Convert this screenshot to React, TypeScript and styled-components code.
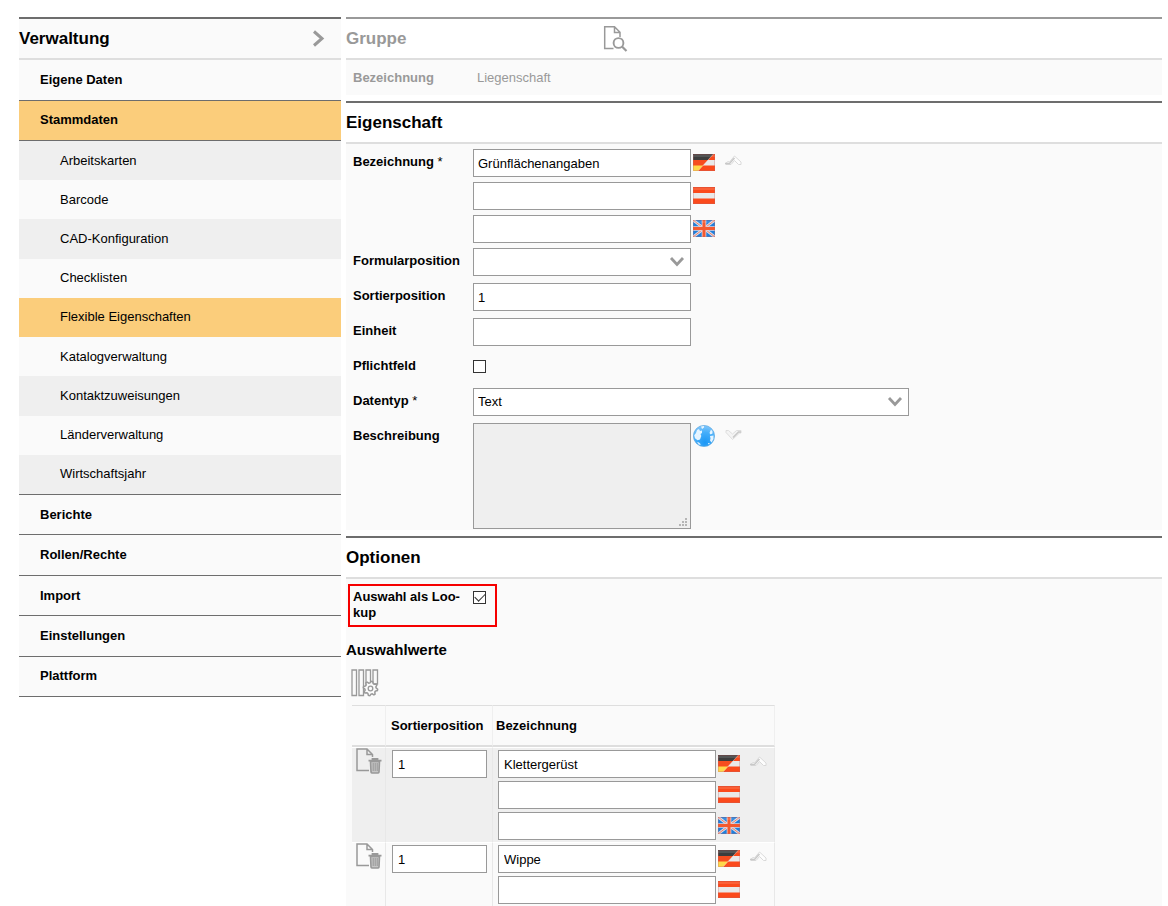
import React, { useState } from "react";
import styled, { createGlobalStyle, css } from "styled-components";

const GlobalStyle = createGlobalStyle`
  * { box-sizing: border-box; }
  body {
    margin: 0;
    background: #fff;
    color: #000;
    font: 13px/16px Arial, "Liberation Sans", sans-serif;
  }
  input, select, textarea, button { font: inherit; color: inherit; }
`;

const Page = styled.div`
  display: flex;
  align-items: flex-start;
  gap: 5px;
  height: 100vh;
  overflow: hidden;
  padding: 17px 6px 0 19px;
`;

/* ---------- Sidebar ---------- */

const Sidebar = styled.nav`
  flex: 0 0 322px;
  background: #fafafa;
  border-top: 2px solid #6d6d6d;
`;

const SidebarHeader = styled.div`
  display: flex;
  align-items: center;
  justify-content: space-between;
  height: 41px;
  padding-right: 16px;
  border-bottom: 2px solid #dedede;
`;

const Title = styled.h2<{ $muted?: boolean }>`
  margin: 0;
  padding-top: 1px;
  font-size: 17px;
  line-height: 20px;
  font-weight: bold;
  color: ${(p) => (p.$muted ? "#999" : "#000")};
`;

const PlainButton = styled.button`
  display: flex;
  padding: 0;
  border: 0;
  background: none;
  cursor: pointer;
`;

const NavGroup = styled.ul<{ $height: number }>`
  display: flex;
  flex-direction: column;
  height: ${(p) => p.$height}px;
  margin: 0;
  padding: 0;
  list-style: none;
`;

const NavItem = styled.li`
  display: flex;
  flex: 1;
`;

const NavLink = styled.a<{ $active?: boolean }>`
  display: flex;
  flex: 1;
  align-items: center;
  padding-left: 21px;
  border-bottom: 1px solid #6d6d6d;
  background: ${(p) => (p.$active ? "#fbcd7b" : "transparent")};
  color: #000;
  font-weight: bold;
  text-decoration: none;
`;

const SubLink = styled.a<{ $active?: boolean; $shaded?: boolean }>`
  display: flex;
  flex: 1;
  align-items: center;
  padding-left: 41px;
  background: ${(p) => (p.$active ? "#fbcd7b" : p.$shaded ? "#efefef" : "transparent")};
  color: #000;
  text-decoration: none;
`;

const SubGroup = styled(NavGroup)`
  border-bottom: 1px solid #6d6d6d;
`;

/* ---------- Main column ---------- */

const Main = styled.main`
  flex: 1;
  min-width: 0;
`;

const Section = styled.section<{ $muted?: boolean }>`
  margin-bottom: 6px;
  border-top: 2px solid ${(p) => (p.$muted ? "#999" : "#6d6d6d")};
`;

const SectionHeader = styled.header`
  display: grid;
  grid-template-columns: 257px auto;
  justify-content: start;
  align-items: center;
  height: 41px;
  border-bottom: 2px solid #dedede;
`;

const SectionBody = styled.div`
  padding: 5px 7px 1px;
  background: #fafafa;
`;

const GroupBody = styled.div`
  display: flex;
  height: 35px;
  padding: 10px 7px 0;
  background: #fafafa;
  color: #999;
`;

const GroupLabel = styled.span`
  width: 124px;
  font-weight: bold;
`;

const Row = styled.div<{ $tight?: boolean }>`
  display: flex;
  align-items: flex-start;
  padding-bottom: ${(p) => (p.$tight ? 0 : 7)}px;
`;

const Label = styled.label`
  flex: 0 0 120px;
  padding: 5px 8px 0 0;
  font-weight: bold;
`;

const Required = styled.span`
  font-weight: normal;
`;

const Lines = styled.div<{ $gap: number; $end?: number }>`
  display: flex;
  flex-direction: column;
  gap: ${(p) => p.$gap}px;
  padding-bottom: ${(p) => p.$end ?? 0}px;
`;

const Line = styled.div`
  display: flex;
  align-items: flex-start;
  gap: 2px;
`;

const box = css`
  border: 1px solid #999;
  border-radius: 0;
  background: #fff;
  outline: none;
`;

const TextInput = styled.input<{ $width: number }>`
  ${box}
  display: block;
  width: ${(p) => p.$width}px;
  height: 28px;
  padding: 0 5px 0 4px;
`;

const CellInput = styled(TextInput)`
  padding-left: 5px;
`;

const SelectWrap = styled.div<{ $width: number }>`
  position: relative;
  width: ${(p) => p.$width}px;
  max-width: 100%;
  svg {
    position: absolute;
    top: 8px;
    right: 6px;
    pointer-events: none;
  }
`;

const Select = styled.select`
  ${box}
  display: block;
  appearance: none;
  width: 100%;
  height: 28px;
  padding: 0 24px 0 4px;
`;

const AreaWrap = styled.div`
  position: relative;
  width: 218px;
  svg {
    position: absolute;
    right: 4px;
    bottom: 3px;
    pointer-events: none;
  }
`;

const TextArea = styled.textarea`
  ${box}
  display: block;
  width: 100%;
  height: 106px;
  padding: 4px;
  background: #efefef;
  resize: none;
`;

const CheckCell = styled.div`
  display: flex;
  height: 28px;
  padding-top: 7px;
`;

const Check = styled.input`
  appearance: none;
  display: flex;
  width: 13px;
  height: 13px;
  margin: 0;
  border: 1px solid #333;
  background: #fff;
  &:checked::before {
    content: "";
    width: 9px;
    height: 5px;
    margin: 1px 0 0 1px;
    border-left: 1px solid #333;
    border-bottom: 1px solid #333;
    transform: rotate(-45deg);
  }
`;

const FlagSlot = styled.span`
  display: flex;
  padding-top: 5px;
`;

const ToggleSlot = styled(PlainButton)`
  margin: 6px 0 0 8px;
`;

const GlobeSlot = styled.span`
  display: flex;
  padding-top: 2px;
`;

/* ---------- Options ---------- */

const OptionsBody = styled.div`
  padding-top: 5px;
  background: #fafafa;
`;

const Highlight = styled.div`
  display: flex;
  width: 149px;
  height: 43px;
  margin-left: 2px;
  padding-left: 3px;
  border: 2px solid #f60000;
`;

const HighlightLabel = styled.label`
  width: 120px;
  padding: 3px 8px 0 0;
  font-weight: bold;
`;

const HighlightCheck = styled.div`
  padding-top: 5px;
`;

const SubTitle = styled.h3`
  margin: 14px 0 0;
  font-size: 15px;
  line-height: 18px;
`;

const Toolbar = styled.div`
  padding: 10px 0 8px 5px;
`;

const Table = styled.table`
  width: 423px;
  margin-left: 6px;
  border-collapse: separate;
  border-spacing: 0;
  table-layout: fixed;
`;

const HeadCell = styled.th<{ $width: number }>`
  width: ${(p) => p.$width}px;
  height: 42px;
  padding: 0 0 0 3px;
  border-top: 1px solid #dedede;
  border-right: 1px solid #efefef;
  border-bottom: 2px solid #dedede;
  text-align: left;
  &:nth-child(2) { padding-left: 5px; }
`;

const BodyRow = styled.tr<{ $shaded?: boolean }>`
  background: ${(p) => (p.$shaded ? "#efefef" : "#fafafa")};
`;

const Cell = styled.td`
  padding: 2px 0 2px 6px;
  border-top: 1px solid #fff;
  border-right: 1px solid #e8e8e8;
  vertical-align: top;
  &:first-child { padding: 0 0 0 4px; }
  &:last-child { padding-left: 5px; }
`;

/* ---------- Icons ---------- */

const ChevronRight = () => (
  <svg width="13" height="17" viewBox="0 0 13 17" fill="none" aria-hidden="true">
    <path d="M2 1.500L10 8.500 2 15.500" stroke="#999" strokeWidth="3" />
  </svg>
);

const ChevronDown = () => (
  <svg width="16" height="12" viewBox="0 0 16 12" fill="none" aria-hidden="true">
    <path d="M2 2l6 6.500L14 2" stroke="#999" strokeWidth="2.800" />
  </svg>
);

const FoldUp = () => (
  <svg width="17" height="11" viewBox="0 0 17 11" fill="none" aria-hidden="true">
    <path d="M.5 8.500L3 6.500 4.500 7l5-6 6.500 6v2.500h-2.500L9.500 5.500 6 9.500H1z" fill="#fdfdfd" stroke="#d6d6d6" strokeWidth=".9" />
    <path d="M0 8.500h4.500L9.500 3" stroke="#c8c8c8" strokeWidth="1.500" />
  </svg>
);

const FoldDown = () => (
  <svg width="17" height="11" viewBox="0 0 17 11" fill="none" aria-hidden="true">
    <path d="M1 1.500h2.500l4 3.500 4-3.500H16V4h-1.500l-7 6.500L1 3.500z" fill="#f4f4f4" stroke="#dadada" strokeWidth=".9" />
    <path d="M8 8.500L13.500 3H16" stroke="#c8c8c8" strokeWidth="1.500" />
  </svg>
);

const SearchDoc = () => (
  <svg width="25" height="27" viewBox="0 0 25 27" fill="none" stroke="#999" aria-hidden="true">
    <path d="M10.500 23.500H1.700V1.800h9.800l5.500 5.500V12M11.500 1.800v5.700h5.500" strokeWidth="1.500" />
    <circle cx="15.500" cy="18" r="4.900" strokeWidth="1.900" />
    <path d="M19 21.500l4.500 4.500" strokeWidth="2.200" />
  </svg>
);

const DeleteDoc = () => (
  <svg width="27" height="27" viewBox="0 0 27 27" fill="none" stroke="#999" aria-hidden="true">
    <path d="M13 22.500H1V1h10l5.500 5.500V9M11 1v5.500h5.500" strokeWidth="1.500" />
    <path d="M14.500 13.500h9l-.5 10.500q-.2 1-1.200 1h-5.600q-1 0-1.200-1z" fill="#c6c6c6" strokeWidth="1.600" />
    <path d="M12.500 12.700H25.500M16.500 11.800v-1h5v1" strokeWidth="1.800" />
    <path d="M17.200 15v8M19.200 15v8M21.200 15v8" strokeWidth="1" />
  </svg>
);

const gearPath = Array.from({ length: 32 }, (_, i) => {
  const radius = i % 4 < 2 ? 7.2 : 5.6;
  const angle = ((i + 0.5) / 32) * Math.PI * 2;
  return `${i ? "L" : "M"}${(19.5 + radius * Math.cos(angle)).toFixed(2)} ${(19.5 + radius * Math.sin(angle)).toFixed(2)}`;
}).join("");

const ColumnsGear = () => (
  <svg width="28" height="28" viewBox="0 0 28 28" fill="none" stroke="#999" aria-hidden="true">
    <path d="M1 1h4.500v25.500H1zM8 1h4.500v25.500H8zM15 1h4.500v14H15zM22 1h4.500v14H22z" strokeWidth="1.300" />
    <path d={`${gearPath}Z`} fill="#fafafa" strokeWidth="1.500" />
    <circle cx="19.500" cy="19.500" r="2.300" strokeWidth="1.300" />
  </svg>
);

const ResizeDots = () => (
  <svg width="8" height="8" viewBox="0 0 8 8" fill="#b5b5b5" aria-hidden="true">
    <path d="M6 0h2v2H6zM3 3h2v2H3zM6 3h2v2H6zM0 6h2v2H0zM3 6h2v2H3zM6 6h2v2H6z" />
  </svg>
);

const Globe = () => (
  <svg width="22" height="22" viewBox="0 0 22 22" role="img" aria-label="Sprachen">
    <defs>
      <radialGradient id="sea" cx="55%" cy="80%" r="85%">
        <stop offset="0" stopColor="#1b97f5" />
        <stop offset=".55" stopColor="#45aefa" />
        <stop offset="1" stopColor="#8bcbfb" />
      </radialGradient>
    </defs>
    <circle cx="11" cy="11" r="10.600" fill="url(#sea)" stroke="#62a9e0" strokeWidth=".7" />
    <path d="M4 5l2-1 1 2 2-.5V8L7.500 9l.8 2L7 14.500l-2.500.7-2.500-2-.8-3L3 8zM8 1.500l3-.5v1.500L9 4zM18 4.500l1.500 2v2l-2 1-1-1.500zM17 11l3.500-.5V14l-2 3.500-1.500-2 .5-2zM4 17l2 .5 2 2-2 .2zM15 18h2l-1.500 1.500z" fill="#f2faff" fillOpacity=".93" />
  </svg>
);

type Lang = "de" | "at" | "en";

const Flag = ({ lang }: { lang: Lang }) => {
  const names = { de: "Deutsch", at: "Österreich", en: "English" };
  return (
    <svg width="22" height="17" viewBox="0 0 22 17" role="img" aria-label={names[lang]}>
      {lang === "en" ? (
        <>
          <path d="M0 0h22v17H0z" fill="#1f7fdc" />
          <path d="M0 0l22 17M22 0L0 17" stroke="#d9dbe6" strokeWidth="2.800" />
          <path d="M0 0l22 17M22 0L0 17" stroke="#f0806a" strokeWidth="1" />
          <path d="M11 0v17M0 8.500h22" stroke="#e6d3da" strokeWidth="4.600" />
          <path d="M11 0v17M0 8.500h22" stroke="#f4592f" strokeWidth="3" />
        </>
      ) : (
        <>
          <path d="M0 0h22v17H0z" fill="#fb4a1c" />
          <path d="M0 6h22v5.500H0z" fill="#e9e9e9" />
          {lang === "de" && (
            <>
              <path d="M0 0h20.500L5 17H0z" fill="#f64d1f" />
              <path d="M0 0h20.500L15 6H0z" fill="#3d3d3d" />
              <path d="M0 11.500h10L5 17H0z" fill="#ffd84a" />
              <path d="M20.500 0L5 17" stroke="#fff" strokeOpacity=".35" />
            </>
          )}
        </>
      )}
      <path d="M0 1h22v2H0z" fill="#fff" fillOpacity=".12" />
      <path d="M.5.500h21v16H.500z" fill="none" stroke="#b66" strokeOpacity=".3" />
    </svg>
  );
};

/* ---------- Data ---------- */

const subItems = [
  "Arbeitskarten",
  "Barcode",
  "CAD-Konfiguration",
  "Checklisten",
  "Flexible Eigenschaften",
  "Katalogverwaltung",
  "Kontaktzuweisungen",
  "Länderverwaltung",
  "Wirtschaftsjahr",
];

const lowerItems = ["Berichte", "Rollen/Rechte", "Import", "Einstellungen", "Plattform"];

const languages: Lang[] = ["de", "at", "en"];

const values = [
  { position: "1", name: "Klettergerüst" },
  { position: "1", name: "Wippe" },
];

/* ---------- Composed parts ---------- */

const LocalizedLines = ({
  id,
  value,
  gap,
  end,
  cell,
}: {
  id: string;
  value: string;
  gap: number;
  end?: number;
  cell?: boolean;
}) => {
  const Field = cell ? CellInput : TextInput;
  return (
    <Lines $gap={gap} $end={end}>
      {languages.map((lang) => (
        <Line key={lang}>
          <Field
            $width={218}
            id={`${id}-${lang}`}
            aria-label={`Bezeichnung ${lang}`}
            defaultValue={lang === "de" ? value : ""}
          />
          <FlagSlot>
            <Flag lang={lang} />
          </FlagSlot>
          {lang === "de" && (
            <ToggleSlot type="button" aria-label="Sprachen einklappen">
              <FoldUp />
            </ToggleSlot>
          )}
        </Line>
      ))}
    </Lines>
  );
};

export default function App() {
  const [lookup, setLookup] = useState(true);

  return (
    <>
      <GlobalStyle />
      <Page>
        <Sidebar>
          <SidebarHeader>
            <Title>Verwaltung</Title>
            <PlainButton type="button" aria-label="Navigation umschalten">
              <ChevronRight />
            </PlainButton>
          </SidebarHeader>
          <NavGroup $height={81}>
            <NavItem>
              <NavLink href="#eigene-daten">Eigene Daten</NavLink>
            </NavItem>
            <NavItem>
              <NavLink href="#stammdaten" $active>
                Stammdaten
              </NavLink>
            </NavItem>
          </NavGroup>
          <SubGroup $height={354}>
            {subItems.map((item, i) => (
              <NavItem key={item}>
                <SubLink href="#stammdaten" $active={item === "Flexible Eigenschaften"} $shaded={i % 2 === 0}>
                  {item}
                </SubLink>
              </NavItem>
            ))}
          </SubGroup>
          <NavGroup $height={202}>
            {lowerItems.map((item) => (
              <NavItem key={item}>
                <NavLink href="#bereich">{item}</NavLink>
              </NavItem>
            ))}
          </NavGroup>
        </Sidebar>

        <Main>
          <Section $muted>
            <SectionHeader>
              <Title $muted>Gruppe</Title>
              <PlainButton type="button" aria-label="Gruppe suchen">
                <SearchDoc />
              </PlainButton>
            </SectionHeader>
            <GroupBody>
              <GroupLabel>Bezeichnung</GroupLabel>
              <span>Liegenschaft</span>
            </GroupBody>
          </Section>

          <Section>
            <SectionHeader>
              <Title>Eigenschaft</Title>
            </SectionHeader>
            <SectionBody>
              <Row $tight>
                <Label htmlFor="name-de">
                  Bezeichnung <Required>*</Required>
                </Label>
                <LocalizedLines id="name" value="Grünflächenangaben" gap={5} end={5} />
              </Row>
              <Row>
                <Label htmlFor="form-position">Formularposition</Label>
                <SelectWrap $width={218}>
                  <Select id="form-position" defaultValue="">
                    <option value=""></option>
                  </Select>
                  <ChevronDown />
                </SelectWrap>
              </Row>
              <Row>
                <Label htmlFor="sort-position">Sortierposition</Label>
                <TextInput $width={218} id="sort-position" defaultValue="1" />
              </Row>
              <Row>
                <Label htmlFor="unit">Einheit</Label>
                <TextInput $width={218} id="unit" />
              </Row>
              <Row>
                <Label htmlFor="mandatory">Pflichtfeld</Label>
                <CheckCell>
                  <Check type="checkbox" id="mandatory" />
                </CheckCell>
              </Row>
              <Row>
                <Label htmlFor="data-type">
                  Datentyp <Required>*</Required>
                </Label>
                <SelectWrap $width={436}>
                  <Select id="data-type" defaultValue="Text">
                    <option>Text</option>
                  </Select>
                  <ChevronDown />
                </SelectWrap>
              </Row>
              <Row $tight>
                <Label htmlFor="description">Beschreibung</Label>
                <Line>
                  <AreaWrap>
                    <TextArea id="description" />
                    <ResizeDots />
                  </AreaWrap>
                  <GlobeSlot>
                    <Globe />
                  </GlobeSlot>
                  <ToggleSlot type="button" aria-label="Sprachen ausklappen">
                    <FoldDown />
                  </ToggleSlot>
                </Line>
              </Row>
            </SectionBody>
          </Section>

          <Section>
            <SectionHeader>
              <Title>Optionen</Title>
            </SectionHeader>
            <OptionsBody>
              <Highlight>
                <HighlightLabel htmlFor="lookup">Auswahl als Loo&shy;kup</HighlightLabel>
                <HighlightCheck>
                  <Check
                    type="checkbox"
                    id="lookup"
                    checked={lookup}
                    onChange={(e) => setLookup(e.target.checked)}
                  />
                </HighlightCheck>
              </Highlight>
              <SubTitle>Auswahlwerte</SubTitle>
              <Toolbar>
                <PlainButton type="button" aria-label="Spalten konfigurieren">
                  <ColumnsGear />
                </PlainButton>
              </Toolbar>
              <Table>
                <thead>
                  <tr>
                    <HeadCell $width={34} aria-label="Aktionen" />
                    <HeadCell $width={107}>Sortierposition</HeadCell>
                    <HeadCell $width={282}>Bezeichnung</HeadCell>
                  </tr>
                </thead>
                <tbody>
                  {values.map((row, i) => (
                    <BodyRow key={row.name} $shaded={i % 2 === 0}>
                      <Cell>
                        <PlainButton type="button" aria-label={`${row.name} löschen`}>
                          <DeleteDoc />
                        </PlainButton>
                      </Cell>
                      <Cell>
                        <CellInput $width={95} aria-label="Sortierposition" defaultValue={row.position} />
                      </Cell>
                      <Cell>
                        <LocalizedLines id={`value-${i}`} value={row.name} gap={3} cell />
                      </Cell>
                    </BodyRow>
                  ))}
                </tbody>
              </Table>
            </OptionsBody>
          </Section>
        </Main>
      </Page>
    </>
  );
}
